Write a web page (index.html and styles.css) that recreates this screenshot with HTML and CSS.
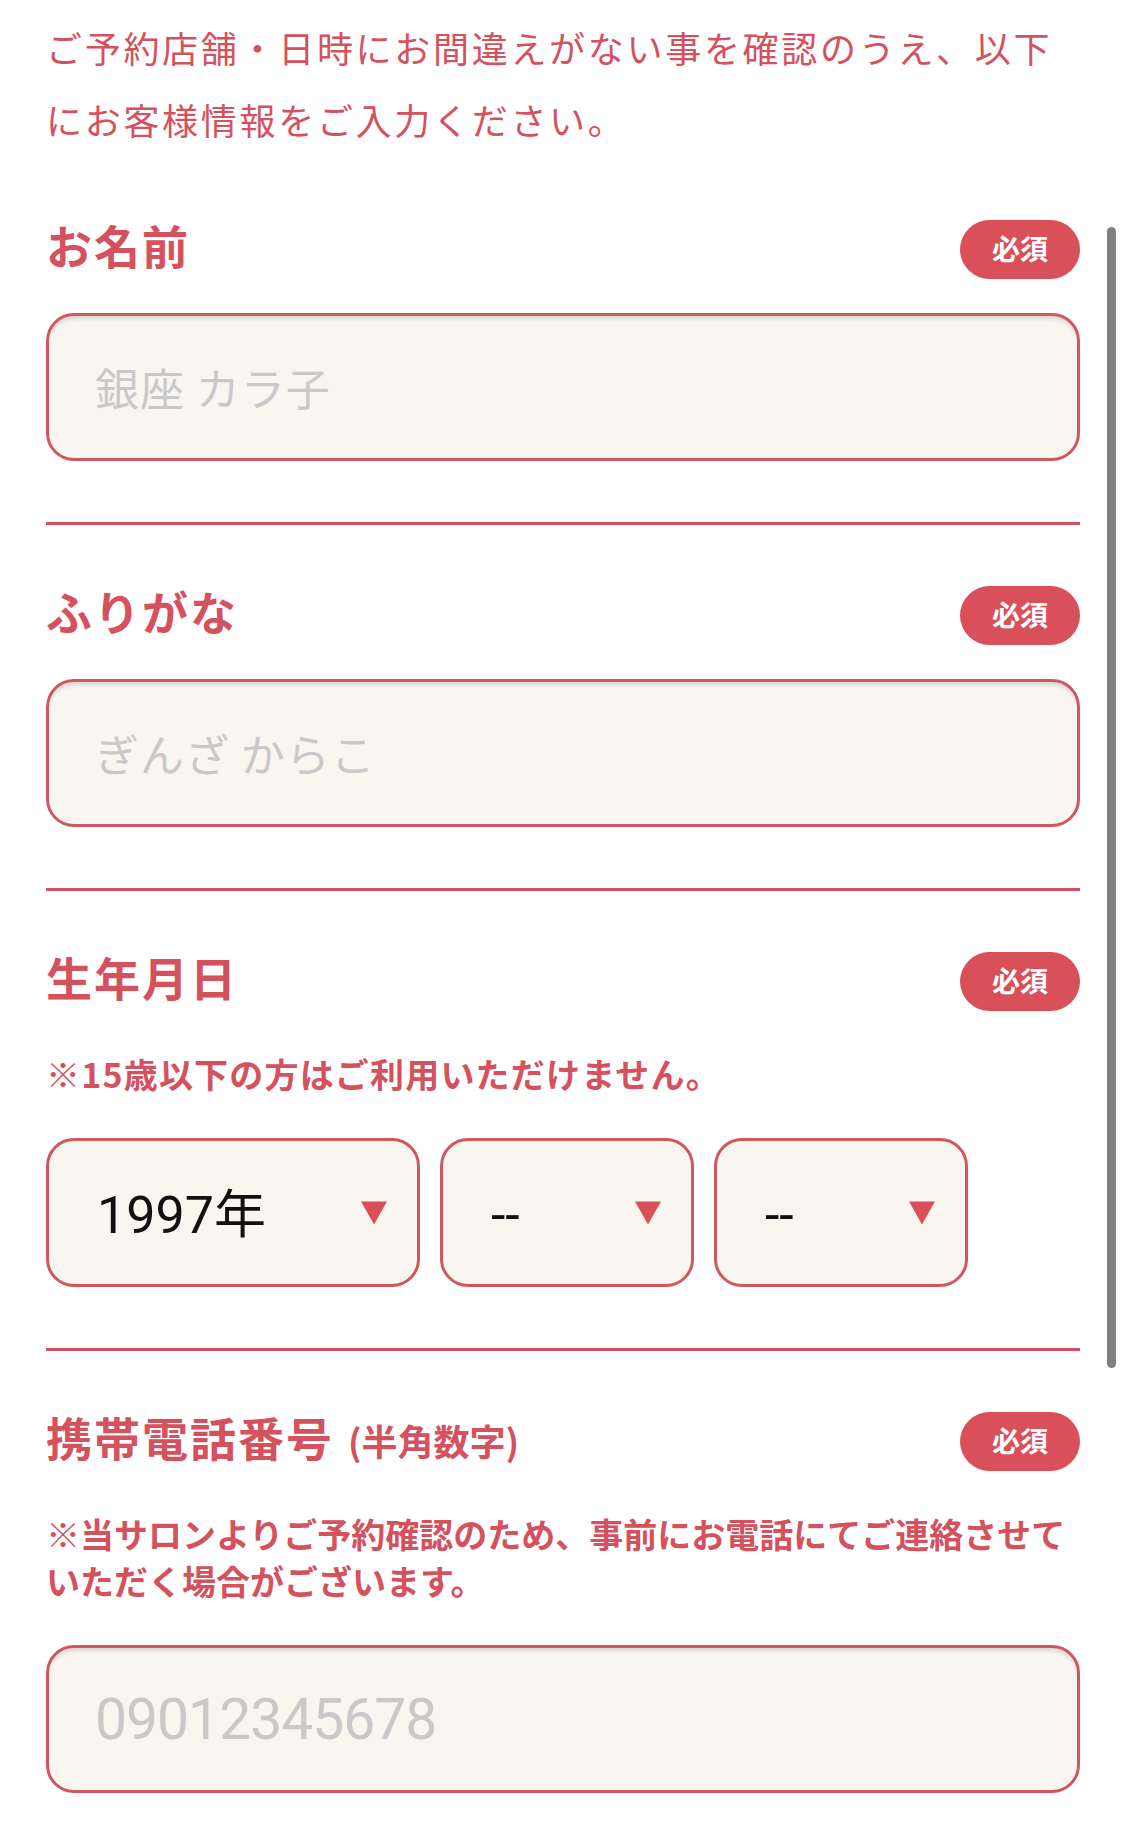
FILE: index.html
```html
<!DOCTYPE html>
<html lang="ja">
<head>
  <meta charset="UTF-8">
  <meta name="viewport" content="width=device-width, initial-scale=1.0">
  <title>お客様情報の入力</title>
  <link rel="stylesheet" href="styles.css">
</head>
<body>

  <div class="page">
    <p class="lead">ご予約店舗・日時にお間違えがない事を確認のうえ、以下<br>にお客様情報をご入力ください。</p>

    <!-- お名前 -->
    <section class="field">
      <div class="field-head">
        <h2 class="field-title">お名前</h2>
        <span class="badge">必須</span>
      </div>
      <input class="text-input" type="text" placeholder="銀座 カラ子">
    </section>

    <hr class="divider">

    <!-- ふりがな -->
    <section class="field">
      <div class="field-head">
        <h2 class="field-title">ふりがな</h2>
        <span class="badge">必須</span>
      </div>
      <input class="text-input" type="text" placeholder="ぎんざ からこ">
    </section>

    <hr class="divider">

    <!-- 生年月日 -->
    <section class="field">
      <div class="field-head">
        <h2 class="field-title">生年月日</h2>
        <span class="badge">必須</span>
      </div>
      <p class="note note-short">※15歳以下の方はご利用いただけません。</p>
      <div class="date-row">
        <div class="select-wrap select-year">
          <select class="date-select">
            <option>1997年</option>
          </select>
        </div>
        <div class="select-wrap">
          <select class="date-select">
            <option>--</option>
          </select>
        </div>
        <div class="select-wrap">
          <select class="date-select">
            <option>--</option>
          </select>
        </div>
      </div>
    </section>

    <hr class="divider">

    <!-- 携帯電話番号 -->
    <section class="field">
      <div class="field-head">
        <h2 class="field-title">携帯電話番号<small class="field-sub">(半角数字)</small></h2>
        <span class="badge">必須</span>
      </div>
      <p class="note">※当サロンよりご予約確認のため、事前にお電話にてご連絡させていただく場合がございます。</p>
      <input class="text-input text-input-number" type="tel" placeholder="09012345678">
    </section>
  </div>

  <div class="scrollbar"></div>

</body>
</html>
```

FILE: styles.css
```css
body {
  margin: 0;
  background-color: #fff;
  font-family: "Noto Sans CJK JP", sans-serif;
  color: #d4515e;
}

.page {
  padding: 11px 45px 0 46px;
}

.lead {
  margin: 0 0 65px;
  font-size: 36px;
  line-height: 72px;
  letter-spacing: 0.075em;
}

.field-head {
  display: flex;
  justify-content: space-between;
  align-items: center;
  height: 59px;
}

.field-title {
  margin: 0 0 12px;
  font-size: 46px;
  font-weight: 700;
  line-height: 1;
  letter-spacing: 2px;
}

.field-sub {
  margin-left: 14px;
  font-size: 36px;
  font-weight: 700;
  letter-spacing: 0;
}

.badge {
  display: flex;
  align-items: center;
  justify-content: center;
  box-sizing: border-box;
  width: 120px;
  height: 59px;
  padding-bottom: 4px;
  border-radius: 30px;
  background-color: #d9505b;
  color: #fff;
  font-size: 28px;
  font-weight: 700;
}

.text-input {
  display: block;
  box-sizing: border-box;
  width: 100%;
  height: 148px;
  margin-top: 34px;
  padding: 0 46px;
  border: 3px solid #d0575f;
  border-radius: 28px;
  background-color: #f8f6ef;
  box-shadow: inset 0 5px 4px -2px rgba(0,0,0,0.12);
  font-family: inherit;
  font-size: 44px;
  letter-spacing: 1px;
  color: #333;
  outline: none;
}

.text-input::placeholder {
  color: #c9c9c9;
}

.text-input-number {
  font-family: Roboto, "Noto Sans CJK JP", sans-serif;
  font-size: 57px;
  letter-spacing: -1px;
}

.note {
  margin: 39px 0 41px;
  font-size: 34px;
  font-weight: 700;
  line-height: 47px;
}

.note-short {
  letter-spacing: 0.035em;
}

.date-row {
  display: flex;
  gap: 20px;
}

.select-wrap {
  position: relative;
  width: 254px;
  height: 149px;
}

.select-year {
  width: 374px;
}

.select-wrap::after {
  content: "";
  position: absolute;
  right: 33px;
  top: 50%;
  transform: translateY(-50%);
  border-left: 13px solid transparent;
  border-right: 13px solid transparent;
  border-top: 23px solid #d9505b;
  pointer-events: none;
}

.date-select {
  appearance: none;
  -webkit-appearance: none;
  box-sizing: border-box;
  width: 100%;
  height: 100%;
  padding: 6px 0 0 48px;
  border: 3px solid #d0575f;
  border-radius: 28px;
  background-color: #f8f6ef;
  font-family: Roboto, "Noto Sans CJK JP", sans-serif;
  font-size: 52px;
  color: #111;
  outline: none;
}

.divider {
  margin: 61px 0;
  border: 0;
  border-top: 3px solid #d2535e;
}

.scrollbar {
  position: absolute;
  top: 227px;
  right: 9px;
  width: 9px;
  height: 1141px;
  border-radius: 5px;
  background-color: #808080;
}
```
